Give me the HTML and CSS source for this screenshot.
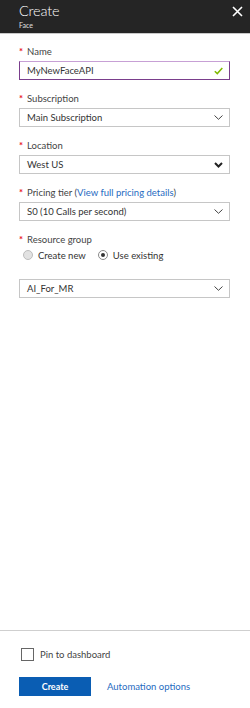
FILE: index.html
```html
<!DOCTYPE html>
<html lang="en">
<head>
<meta charset="utf-8">
<title>Create Face</title>
<link rel="stylesheet" href="styles.css">
</head>
<body>
<div class="blade">
  <header class="blade-header">
    <div class="titles">
      <div class="title">Create</div>
      <div class="subtitle">Face</div>
    </div>
    <svg class="close" width="11" height="11" viewBox="0 0 11 11"><path d="M1 1L10 10M10 1L1 10" stroke="#fff" stroke-width="1.6" fill="none"/></svg>
  </header>

  <main class="form">
    <div class="field">
      <div class="label"><span class="req">*</span>Name</div>
      <div class="input focused">
        <span class="value">MyNewFaceAPI</span>
        <svg class="check" width="9" height="8" viewBox="0 0 9 8"><path d="M0.8 4.2L3.3 6.6L8.3 1" stroke="#7fba00" stroke-width="1.5" fill="none"/></svg>
      </div>
    </div>

    <div class="field">
      <div class="label"><span class="req">*</span>Subscription</div>
      <div class="input">
        <span class="value">Main Subscription</span>
        <svg class="chev" width="9" height="5" viewBox="0 0 9 5"><path d="M0.5 0.5L4.5 4.3L8.5 0.5" stroke="#444" stroke-width="1" fill="none"/></svg>
      </div>
    </div>

    <div class="field">
      <div class="label"><span class="req">*</span>Location</div>
      <div class="input">
        <span class="value">West US</span>
        <svg class="chev" width="9" height="6" viewBox="0 0 9 6"><path d="M1 1L4.5 4.5L8 1" stroke="#222" stroke-width="2" fill="none"/></svg>
      </div>
    </div>

    <div class="field">
      <div class="label"><span class="req">*</span>Pricing tier (<a class="link" href="#">View full pricing details</a>)</div>
      <div class="input">
        <span class="value">S0 (10 Calls per second)</span>
        <svg class="chev" width="9" height="5" viewBox="0 0 9 5"><path d="M0.5 0.5L4.5 4.3L8.5 0.5" stroke="#444" stroke-width="1" fill="none"/></svg>
      </div>
    </div>

    <div class="field">
      <div class="label"><span class="req">*</span>Resource group</div>
      <div class="radios">
        <span class="radio"><span class="dot off"></span>Create new</span>
        <span class="radio"><span class="dot on"></span>Use existing</span>
      </div>
      <div class="input spaced">
        <span class="value">AI_For_MR</span>
        <svg class="chev" width="9" height="5" viewBox="0 0 9 5"><path d="M0.5 0.5L4.5 4.3L8.5 0.5" stroke="#444" stroke-width="1" fill="none"/></svg>
      </div>
    </div>
  </main>

  <footer class="footer">
    <label class="pin"><span class="box"></span>Pin to dashboard</label>
    <div class="actions">
      <button class="btn-primary">Create</button>
      <a class="link auto" href="#">Automation options</a>
    </div>
  </footer>
</div>
</body>
</html>
```
FILE: styles.css
```css
* { box-sizing: border-box; }
html, body { margin: 0; padding: 0; }
body {
  width: 250px;
  height: 708px;
  font-family: Lato, "Liberation Sans", sans-serif;
  color: #333;
  background: #fff;
}
.blade {
  display: flex;
  flex-direction: column;
  height: 708px;
}
.blade-header {
  height: 34px;
  background: #252525;
  border-bottom: 1px solid #c8c8c8;
  display: flex;
  justify-content: space-between;
  padding: 2px 7px 0 19px;
}
.title {
  color: #fff;
  font-size: 14.5px;
  font-weight: 300;
  line-height: 18px;
  letter-spacing: -0.2px;
}
.subtitle {
  color: #e0e0e0;
  font-size: 7px;
  line-height: 9px;
  margin-top: 1px;
}
.close { margin-top: 4px; }

.form {
  flex: 1;
  padding: 12px 20px 0 19px;
}
.field { margin-bottom: 13px; }
.label {
  font-size: 9.5px;
  line-height: 12px;
  color: #444;
  margin-bottom: 3px;
  white-space: nowrap;
}
.req {
  color: #e81123;
  margin-right: 4px;
  font-weight: 700;
}
.link { color: #1f6bc1; text-decoration: none; }
.input {
  height: 19px;
  border: 1px solid #c6c6c6;
  display: flex;
  align-items: center;
  justify-content: space-between;
  padding: 0 6px 0 7px;
  font-size: 9.5px;
  color: #333;
}
.input.focused {
  border-color: #7a3e8c;
  border-top-color: #c7a0d5;
}
.input.spaced { margin-top: 18px; }
.radios {
  display: flex;
  gap: 12px;
  padding-left: 4px;
  margin-top: 2px;
  height: 12px;
  align-items: center;
  font-size: 9.5px;
  color: #333;
}
.radio { display: flex; align-items: center; }
.dot {
  width: 10px;
  height: 10px;
  border-radius: 50%;
  border: 1px solid #a8a8a8;
  margin-right: 5px;
  position: relative;
}
.dot.off { background: #e2e2e2; border-color: #bdbdbd; }
.dot.on { background: #fff; border-color: #8a8a8a; }
.dot.on::after {
  content: "";
  position: absolute;
  left: 2px;
  top: 2px;
  width: 4px;
  height: 4px;
  border-radius: 50%;
  background: #333;
}

.footer {
  border-top: 1px solid #cfcfcf;
  padding: 16px 20px 12px 19px;
}
.pin {
  display: flex;
  align-items: center;
  height: 14px;
  font-size: 9.5px;
  color: #444;
  padding-left: 2px;
}
.box {
  width: 13px;
  height: 13px;
  border: 1px solid #666;
  margin-right: 6px;
  background: #fff;
}
.actions {
  display: flex;
  align-items: center;
  margin-top: 16px;
  gap: 16px;
}
.btn-primary {
  width: 72px;
  height: 19px;
  background: #0a5db3;
  color: #fff;
  border: none;
  font-family: Lato, "Liberation Sans", sans-serif;
  font-weight: 700;
  font-size: 9px;
  padding: 0;
}
.auto { font-size: 9.5px; }
```
